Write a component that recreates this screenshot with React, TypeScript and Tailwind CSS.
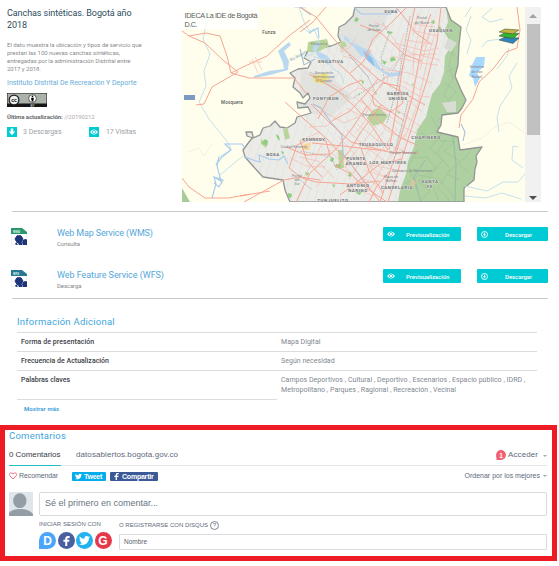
import React from "react";

const DIN = "font-['Roboto','Liberation_Sans',sans-serif]";
const ARIAL = "font-['Liberation_Sans',Arial,sans-serif]";

const CITY =
  "M355 7L353 16 345 24 339 27 338 36 341 42 331 46 318 48 308 51 304 58 311 62 308 68 298 69 290 73 295 78 293 87 300 93 303 98 308 93 310 98 305 104 297 102 298 108 308 107 311 113 297 117 295 123 287 128 280 127 275 121 270 126 263 128 260 135 253 138 247 136 246 132 252 132 253 137 249 142 243 150 245 157 252 165 263 177 283 180 285 190 290 202 464 202 464 188 474 180 475 169 477 162 476 156 482 147 460 150 458 137 437 132 441 125 442 115 458 113 462 108 466 100 461 90 455 76 458 65 459 45 461 27 451 20 446 7Z";
const HILLS =
  "M446 7L448 22 444 32 452 44 445 56 444 72 440 84 432 94 429 105 426 117 417 130 414 147 408 161 406 174 400 190 398 202 464 202 464 188 474 180 475 169 477 162 476 156 482 147 460 150 458 137 437 132 441 125 442 115 458 113 462 108 466 100 461 90 455 76 458 65 459 45 461 27 451 20Z";

const majorRoads = [
  "M182 31L189 36 206 33 220 36 227 56 231 73 249 78 294 78 306 93",
  "M189 36L205 43 224 61 238 72 212 87 204 104 196 105",
  "M310 20L290 35 267 56 243 67 231 73",
  "M300 7L316 17 329 33 340 46 360 63 378 79 402 92 425 105",
  "M326 7L312 23 300 32",
  "M395 7L401 13 416 33 431 44",
  "M401 13L407 7M401 13L390 24 373 39 366 55",
  "M415 7L410 31 402 70 397 106 389 150",
  "M431 14L425 29 418 66 412 99 398 147 380 202",
  "M441 7L437 42 427 80 411 130 397 174 388 202",
  "M311 104L330 123 351 142 389 152 419 153",
  "M312 143L343 146 386 151",
  "M367 106L353 127 337 148 310 173 296 202",
  "M285 102L305 120 327 139 354 168 380 202",
  "M309 74L338 91 356 108 371 125 388 150",
  "M318 119L329 97 349 85 362 80",
  "M362 100L377 119 401 138 417 145",
  "M378 79L365 95 350 111 332 121",
  "M333 59L349 73 364 88 380 104 404 121",
  "M360 25L381 33 405 55 422 61",
  "M371 50L362 63 350 73",
  "M372 96L383 83 399 86 403 103 391 112 374 105Z",
  "M289 168L297 145 313 138 326 141 330 156",
  "M289 168L302 178 316 182 351 184 380 181",
  "M244 202L284 180 300 177 320 180",
  "M240 196L270 191M182 178L189 187 205 198 229 198 250 194",
  "M390 171L377 186 369 202M361 148L369 171 383 193",
  "M334 165L351 174 366 188 387 202M340 195L357 182 380 164 402 159",
  "M517 7L520 30 517 48 506 52 493 69 479 82 473 99 461 115 459 128",
  "M337 167L350 150 361 132 381 105",
  "M286 147L306 155 330 154M300 140L307 161 322 177",
];

const minorRoads = [
  "M252 59L258 73M255 57L262 70M249 62H262",
  "M390 33L399 47 411 53 440 60M394 43L425 51 439 48M391 56L421 63 438 65",
  "M381 69L409 73 432 83M397 61L389 70 387 83M405 66L397 79 421 90",
  "M404 33L399 49 401 63M418 13L413 35M423 18L414 51 413 74M433 20L420 70",
  "M410 30L438 36M405 40L432 44M413 24L435 27M407 55L437 54",
  "M400 85L419 96 430 97M389 92L409 101 421 111M397 110L420 126",
  "M372 112L386 130 410 142M378 107L405 128 416 133",
  "M368 118L355 133M376 126L354 154 345 168M383 132L363 158 349 179",
  "M397 129L376 158 362 182M405 134L382 168 370 190",
  "M357 124L377 140 404 151M347 130L370 150 391 166",
  "M338 136L360 160 388 179M328 149L344 165 359 184",
  "M309 127L327 126 341 112M304 139L320 132M299 157L318 161 334 178",
  "M290 158L307 166 325 167M303 178L315 160 322 143M316 187L330 169",
  "M321 110L344 123 358 117M319 76L342 90M344 98L358 88 376 92",
  "M346 108L365 118M354 97L376 112M386 76L375 94 366 114",
  "M352 188L374 196M365 164L403 171M365 170L398 182M364 179L391 190",
  "M343 56L356 60 371 71M356 37L350 47 340 52M374 22L389 28",
  "M429 34L422 48 413 92 404 125 396 150M435 33L427 61 418 104 404 139",
];

const streams = [
  "M204 7L206 25 203 39 210 54 204 71 206 86 199 102 209 119 222 135 229 144 231 150 219 157 216 165",
  "M300 26L308 32 314 29 319 41 313 54 304 57M299 7L304 22 311 34",
  "M341 35L354 41 368 52 382 66 399 72",
  "M313 56L326 61 332 68 341 74 344 84",
  "M471 16L466 30 471 40 467 54M492 8L482 17 490 22 503 19M500 39L487 41 482 47",
  "M497 69L507 56 509 48M517 63L509 76 512 88 500 106M500 106L497 118 499 132",
  "M518 147L513 146 512 160 523 168M465 186L487 191 503 182 518 182 525 174",
  "M471 7L465 17M465 196L485 198 502 193 521 199",
  "M243 156L233 164 219 176 222 184",
  "M294 7L306 8",
];

const hillLines = [
  "M447 33L453 49 449 65 453 79 444 94 452 107 438 121",
  "M450 52L457 57M446 72L457 67M445 83L456 91 448 101",
  "M431 116L441 134 430 148 443 160 429 177 439 202",
  "M420 133L435 140 455 142 444 151 460 161 447 174 460 180",
  "M412 158L427 157 436 168 418 181 430 191 420 202",
  "M405 184L419 175 439 179 454 197M418 150L408 166 417 190",
  "M446 139L437 153 450 169 438 188 451 202M470 152L459 164 469 173",
];

type Label = [number, number, string];
const labels: Label[] = [
  [391, 13, "SUBA"],
  [441, 32, "USAQUEN"],
  [331, 62.5, "ENGATIVA"],
  [326, 100, "FONTIBON"],
  [398, 95, "BARRIOS"],
  [398, 99.5, "UNIDOS"],
  [314, 141, "KENNEDY"],
  [376, 145.5, "TEUSAQUILLO"],
  [356, 160, "PUENTE"],
  [356, 164.5, "ARANDA"],
  [388, 164, "LOS MARTIRES"],
  [426, 139, "CHAPINERO"],
  [430, 183, "SANTA"],
  [430, 187.5, "FE"],
  [358, 187, "ANTONIO"],
  [358, 191.5, "NARINO"],
  [397, 188.5, "CANDELARIA"],
  [333, 201.5, "TUNJUELITO"],
  [273, 156, "BOSA"],
];

const smallLabels: Label[] = [
  [324, 74, "Aeropuerto"],
  [324, 78, "Internacional"],
  [324, 82, "El Dorado"],
  [374, 27, "Portal"],
  [374, 31, "de Suba"],
  [422, 19, "Portal"],
  [422, 24, "del Norte"],
  [477, 68, "Embalse"],
  [477, 73, "de San"],
  [477, 78, "Rafael"],
  [319, 45, "Parque La"],
  [374, 116, "Parque Simón"],
  [403, 154, "Parque Nacional"],
  [412, 172, "Santuario de Monserrate"],
  [391, 178, "Plaza de"],
  [391, 182, "Bolívar"],
  [294, 148, "Ciudad Kennedy"],
  [297, 177, "Portal"],
  [297, 181, "del"],
  [297, 185, "Sur"],
];

function CityMap() {
  return (
    <svg className="block h-[195px] w-[343px]" viewBox="182 7 343 195">
      <defs>
        <clipPath id="city"><path d={CITY} /></clipPath>
        <clipPath id="hills"><path d={HILLS} /></clipPath>
      </defs>
      <rect x="182" y="7" width="343" height="195" fill="#fffeed" />
      <path d="M182 188L190 202H182Z" fill="#a8cc99" />
      <path d="M188 152L199 148 204 156 212 144M463 145L482 138 494 128 509 122 525 133" fill="none" stroke="#efeadb" strokeWidth=".7" />
      <path d={CITY} fill="#ebebe8" />
      <g clipPath="url(#city)" fill="none">
        <path d="M353 7L391 7 379 37 360 60 340 52 338 30ZM301 70L331 76 353 98 330 117 299 111Z" fill="#e2e3df" />
        <g stroke="#dedfdc" strokeWidth=".5">
          {Array.from({ length: 24 }, (_, i) => (
            <path key={i} d={`M${270 + i * 8} 7l-60 195M${230 + i * 10} 40l140 162`} />
          ))}
        </g>
        <path d="M310 72L328 84 349 98M349 55L368 77 376 94M353 98L390 75 403 53M300 151L331 157 337 170M298 178L312 190M383 23L389 34 381 57 384 79" stroke="#b7babb" strokeWidth=".9" strokeDasharray="2 1" />
      </g>
      <path d={HILLS} fill="#afd0a1" />
      <g clipPath="url(#hills)" fill="none">
        <g stroke="#9dc098" strokeWidth=".6">
          {hillLines.map((d) => <path key={d} d={d} />)}
        </g>
        <path d="M453 137L456 164 455 202M425 160L414 177 421 202" stroke="#8db8ad" strokeWidth=".8" />
      </g>
      <path d="M442 103L456 101 456 112 447 112ZM448 38L457 43 451 52 444 48Z" fill="#d8ddd3" />
      <path d="M411 178L416 183 412 188Z" fill="#dfc49d" />
      <path d={CITY} fill="none" stroke="#929694" strokeWidth="1.3" strokeLinejoin="round" />

      <path d="M308 42L327 39 329 46 318 52 307 52ZM283 129L287 127 290 138 285 140ZM340 41L345 42 347 46 341 49ZM367 118L373 110 379 108 388 116 383 123 373 126ZM338 150L343 150 344 168 339 168ZM261 139L267 143 266 148 261 144Z" fill="#b9d59d" />
      <path d="M313 76L326 73 329 78 323 84 314 82Z" fill="#eee37a" />
      <path d="M302 145L311 142 309 150 302 150ZM304 145L311 144 309 151Z" fill="#f8d8a1" />
      <g fill="#8fce7e">
        <path d="M356 17l3 2-2 3-3-1zM388 31l5 1-2 2-4-1zM390 58l4-1 2 3-5 2zM382 60l5 2-3 3zM361 80l3 1-1 4zM358 93l2 1-1 2zM265 139l3 2-1 5-5-3zM276 134l3 2 1 5-3-3zM331 157l3 1-1 4-3-1zM336 164l5 1-1 4-5-2zM357 190l5 1-2 4-4-2zM305 172l4 1-2 3zM350 171l2 3-1 3-3-1zM432 20l3 1-1 3-3-1zM439 26l2 1-1 4-3-1zM412 83l2 1-1 2zM281 151l3 1-1 3zM397 111l3 1-1 2zM374 92l3 1-1 2zM332 184l3 1-1 3zM288 193l4 1-1 4-3-1z" />
      </g>

      <path d="M254 76L269 71 284 69 283 63 278 51 289 42 291 45 284 51 289 61 288 70 270 75 254 78ZM345 35L350 42 361 47 369 50 376 61 381 69 389 73 400 72 403 65 402 75 390 77 376 68 371 59 361 56 354 47 344 39ZM314 44L321 42 317 51 312 50ZM314 50L326 55 332 61 328 65 319 58Z" fill="#b9d7ee" />
      <path d="M363 50L372 58 375 67 367 60Z" fill="#8fbfeb" />
      <path d="M472 65L476 57 485 57 484 66 477 73 480 78 475 87 473 78 469 76Z" fill="#a9d8ff" />
      <g fill="none" stroke="#c4e1ea" strokeWidth="1">
        {streams.map((d) => <path key={d} d={d} />)}
      </g>
      <g fill="none" stroke="#a5caee" strokeWidth="1.1">
        <path d="M216 165L222 157 231 150 225 144 242 144 244 147M219 157L217 166 221 181 214 177 216 184 212 198M214 177L223 180 219 187 214 183M245 157L253 160 260 162 259 155 269 159 279 160 284 156 288 164M300 7L311 15M309 33L318 28 319 38M354 7L361 14 375 14 390 14 399 9" />
        <path d="M313 104L321 108 330 121 342 135 343 154 354 168 369 188M461 124L465 132 463 141M300 49L304 65 315 59" stroke="#a7bfda" />
      </g>

      <g fill="none" stroke="#f7a592" strokeWidth="1" strokeLinejoin="round">
        {majorRoads.map((d) => <path key={d} d={d} />)}
      </g>
      <g fill="none" stroke="#f6b9ae" strokeWidth=".65">
        {minorRoads.map((d) => <path key={d} d={d} />)}
      </g>
      <path d="M410 16L404 49 396 92 387 123M408 101L401 129 395 151M349 55L369 78" fill="none" stroke="#a5a2a7" strokeWidth=".8" strokeDasharray="1.5 1" />

      <g className={DIN} textAnchor="middle" fontWeight="700" fill="#6b7075" stroke="#f2f2ed" strokeWidth=".5" paintOrder="stroke" letterSpacing=".55">
        {labels.map(([x, y, t]) => <text key={`${t}${x}`} x={x} y={y} fontSize="4.4">{t}</text>)}
      </g>
      <g className={DIN} textAnchor="middle" fill="#81858a">
        {smallLabels.map(([x, y, t]) => <text key={`${x}${y}`} x={x} y={y} fontSize="3.7">{t}</text>)}
        <text x="269" y="33.5" fontSize="4.5" fontWeight="500" fill="#55585a" letterSpacing=".3">Funza</text>
        <text x="232" y="104.3" fontSize="4.5" fontWeight="500" fill="#55585a" letterSpacing=".2">Mosquera</text>
        <text x="299" y="57" fontSize="4" fill="#7a97b0" transform="rotate(-28 299 57)">Río Bogotá</text>
      </g>

      <rect x="182" y="7" width="76" height="22" fill="#fff" opacity=".78" />
      <g className={ARIAL} fontSize="7.2" fill="#5a5e60">
        <text x="184.5" y="18" textLength="73">IDECA La IDE de Bogotá</text>
        <text x="184.5" y="27" textLength="13">D.C.</text>
      </g>
      <rect x="184" y="95" width="11" height="5" fill="#7c9bc0" />
      <g stroke="#33453a" strokeWidth=".5">
        <path d="M499 40L505 37 519 38 513 43.5Z" fill="#2e86bd" />
        <path d="M499 36L505 32.5 519 33.5 513 38.5Z" fill="#35b52f" />
        <path d="M499 32L505 29 519 30 513 34Z" fill="#c6b23f" />
      </g>
    </svg>
  );
}

function ServiceIcon({ kind, tint }: { kind: string; tint: string }) {
  return (
    <svg className="block h-[17px] w-4" viewBox="0 0 16 17">
      <path d="M.4 5V16.6H15.5V5" fill="#fff" stroke="#e2e4ea" strokeWidth=".6" />
      <path d="M0 0H11L16 4V6H0Z" fill={tint} />
      <text x="2" y="4.6" fontSize="3" fontWeight="700" fill="#d9efe6" className={DIN}>{kind}</text>
      <path d="M6 7.800H10L12 11 10 14.500H6L4 11Z" fill="#1e3478" stroke="#1e3478" strokeLinejoin="round" />
      <path d="M6.500 14H10.500L11.500 17H8Z" fill="#1e3478" />
      <path d="M12 12L14 11 16 11.500V17H12L11 14.500Z" fill="#1e3478" />
      <path d="M4 15.500L5.500 14.500 7 16.500 5 17Z" fill="#1e3478" />
    </svg>
  );
}

function EyeIcon({ className }: { className: string }) {
  return (
    <svg className={className} viewBox="0 0 8 6">
      <path d="M0 3Q4-2.200 8 3 4 8.200 0 3Z" fill="#fff" />
      <circle cx="4" cy="3" r="1.55" fill="none" stroke="#00cad3" strokeWidth=".8" />
    </svg>
  );
}

function ServiceRow({ kind, tint, name, action, nameClass }: {
  kind: string; tint: string; name: string; action: string; nameClass: string;
}) {
  return (
    <div className="flex h-[42px] items-start">
      <div className="w-[46px] pt-px"><ServiceIcon kind={kind} tint={tint} /></div>
      <div className="w-[326px] whitespace-nowrap">
        <div className={`text-[9px] leading-[12px] text-[#54a8da] ${nameClass}`}>{name}</div>
        <div className="text-[6px] leading-[10px] tracking-[-0.12px] text-[#85888a]">{action}</div>
      </div>
      <div className="flex h-[14px] w-[78px] items-center rounded-[1px] bg-[#00cad3] pl-1 text-[6px] font-medium text-white">
        <EyeIcon className="h-[6px] w-2" />
        <span className="ml-[11px] tracking-[-0.04px]">Previsualización</span>
      </div>
      <div className="ml-4 flex h-[14px] w-[71px] items-center rounded-[1px] bg-[#00cad3] pl-1 text-[6px] font-medium text-white">
        <svg className="size-[7px]" viewBox="0 0 7 7">
          <circle cx="3.500" cy="3.500" r="3" fill="none" stroke="#fff" strokeWidth=".9" />
          <path d="M3.500 1.700V4.300M2.200 3.500L3.500 4.700 4.800 3.500" fill="none" stroke="#fff" strokeWidth=".9" />
        </svg>
        <span className="ml-[17px] tracking-[-0.04px]">Descargar</span>
      </div>
    </div>
  );
}

function DatasetSummary() {
  return (
    <div className="w-[175px] whitespace-nowrap">
      <h1 className="text-[9px] leading-[12px] tracking-[-0.07px] text-[#2d4c5c]">Canchas sintéticas. Bogotá año<br />2018</h1>
      <p className="mt-[10px] text-[6px] leading-[8px] tracking-[-0.03px] text-[#8a8d90]">
        El dato muestra la ubicación y tipos de servicio que<br />
        prestan las 100 nuevas canchas sintéticas,<br />
        entregadas por la administración Distrital entre<br />
        2017 y 2018.
      </p>
      <div className="mt-[5px] text-[7px] leading-[10px] tracking-[-0.02px] text-[#68acd9]">Instituto Distrital De Recreación Y Deporte</div>
      <svg className="mt-[5px] block h-[14px] w-10" viewBox="0 0 40 14">
        <path d="M0 0H40V14H0Z" fill="#161616" />
        <path d="M.5.5H39.500V10.500H.5Z" fill="#aab2aa" />
        <circle cx="7" cy="7" r="5.500" fill="#202020" />
        <circle cx="7" cy="7" r="3.900" fill="#eee" stroke="#fff" strokeWidth=".6" />
        <text x="4.200" y="8.600" fontSize="5" fontWeight="700" className={ARIAL}>cc</text>
        <circle cx="25.500" cy="5.500" r="3.900" fill="#fff" stroke="#333" strokeWidth=".8" />
        <circle cx="25.500" cy="3.400" r=".8" />
        <path d="M24.200 4.700H26.800V6.800H26.300V8.500H24.700V6.800H24.200Z" />
        <text x="23.500" y="13.600" fontSize="3" fill="#fff" className={ARIAL}>BY</text>
      </svg>
      <div className="mt-[5px] text-[6px] leading-[10px] text-[#b0a9af]">
        <b className="tracking-[-0.04px] text-[#686b6e]">Última actualización:</b> <span className="tracking-[-0.1px]">//20190212</span>
      </div>
      <div className="mt-[5px] flex h-[10px] items-center text-[7px] leading-[10px] text-[#9ca1a6]">
        <svg className="size-[10px]" viewBox="0 0 10 10">
          <path d="M0 0H10V10H0Z" fill="#00cad3" />
          <path d="M3.700 1.500H6.300V4.500H8.300L5 8.300 1.700 4.500H3.700Z" fill="#fff" />
        </svg>
        <span className="ml-[6px] w-[66px] tracking-[-0.02px]">3 Descargas</span>
        <span className="flex size-[10px] items-center justify-center bg-[#00cad3]"><EyeIcon className="h-[6px] w-2" /></span>
        <span className="ml-[7px] tracking-[-0.08px]">17 Visitas</span>
      </div>
    </div>
  );
}

function InfoTable() {
  const key = "w-[260px] pl-1 font-medium text-[#3c4045]";
  const value = "flex-1 pl-1 tracking-[0.03px] text-[#7f8790]";
  return (
    <section className="ml-[17px] mt-[17px] w-[520px] whitespace-nowrap text-[7px] leading-[10px]">
      <h2 className="h-4 text-[9.500px] leading-[12px] tracking-[0.24px] text-[#3ea5dc]">Información Adicional</h2>
      <div className="flex h-[19px] border-t border-[#dadcdd] pt-1"><div className={`${key} tracking-[0.06px]`}>Forma de presentación</div><div className={value}>Mapa Digital</div></div>
      <div className="flex h-[19px] border-t border-[#dadcdd] pt-1"><div className={key}>Frecuencia de Actualización</div><div className={value}>Según necesidad</div></div>
      <div className="flex h-[29px] border-t border-[#dadcdd] pt-1">
        <div className={`${key} h-[25px] border-b border-[#dadcdd]`}>Palabras claves</div>
        <div className={value}>Campos Deportivos , Cultural , Deportivo , Escenarios , Espacio público , IDRD ,<br />Metropolitano , Parques , Ragional , Recreación , Vecinal</div>
      </div>
      <div className="ml-[7px] mt-[5px] text-[6px] font-bold leading-[10px] tracking-[0.08px] text-[#45a4dc]">Mostrar más</div>
    </section>
  );
}

function FacebookMark({ className }: { className: string }) {
  return <svg className={className} viewBox="0 0 10 16"><path d="M3 16V9H0V6H3V4Q3 0 7 0H10V3H8Q6.200 3 6.200 4.700V6H9.700L9.200 9H6.200V16Z" fill="#fff" /></svg>;
}

function TwitterMark({ className }: { className: string }) {
  return (
    <svg className={className} viewBox="0 0 24 24">
      <path fill="#fff" d="M23.950 4.570a10 10 0 0 1-2.820.775 4.960 4.960 0 0 0 2.160-2.723 9.900 9.900 0 0 1-3.130 1.195 4.920 4.920 0 0 0-8.380 4.482A13.950 13.950 0 0 1 1.640 3.162a4.820 4.820 0 0 0-.67 2.475c0 1.710.87 3.213 2.190 4.096a4.900 4.900 0 0 1-2.230-.616v.06a4.920 4.920 0 0 0 3.950 4.827 5 5 0 0 1-2.210.085 4.940 4.940 0 0 0 4.600 3.419A9.870 9.870 0 0 1 0 19.540a14 14 0 0 0 7.560 2.209c9.050 0 14-7.496 14-13.985l-.02-.63a9.940 9.940 0 0 0 2.410-2.564Z" />
    </svg>
  );
}

function Comments() {
  return (
    <section className={`mt-[11px] h-[136px] w-[557px] whitespace-nowrap border-[5px] border-[#ed1c24] pl-1 pr-[5px] text-[#60697a] ${ARIAL}`}>
      <h2 className={`h-[18px] text-[9.500px] leading-[12px] tracking-[0.25px] text-[#3ea5dc] ${DIN}`}>Comentarios</h2>
      <div className="flex h-[18px] border-b border-[#e3e5e7] text-[8px] leading-[14px]">
        <div className="h-[18px] w-[52px] border-b border-[#22c0c3] tracking-[-0.05px] text-[#373c48]">0 Comentarios</div>
        <div className="ml-[15px] tracking-[0.08px]">datosabiertos.bogota.gov.co</div>
        <div className="ml-auto flex h-[14px] items-center">
          <svg className="mr-[2px] size-[10px]" viewBox="0 0 10 10">
            <circle cx="5" cy="5" r="4.900" fill="#f05f70" />
            <path d="M.5 5V10H5Z" fill="#f05f70" />
            <text x="3.300" y="7.500" fontSize="6.500" fontWeight="700" fill="#fff">1</text>
          </svg>
          <span className="tracking-[0.08px]">Acceder</span><span className="ml-[5px] mt-px border-x-[2px] border-t-[2px] border-x-transparent border-t-[#a2a8b0]" />
        </div>
      </div>
      <div className="flex h-[26px] items-start pt-[6px] text-[7px] leading-[8px]">
        <svg className="mr-[2px] size-2" viewBox="0 0 24 24"><path d="M12 21L3 12C-3 5 6-1 12 6 18-1 27 5 21 12Z" fill="none" stroke="#ee5b6d" strokeWidth="2.600" /></svg>
        <span className="w-[53px] tracking-[-0.1px]">Recomendar</span>
        <span className="flex h-[9px] w-[34px] items-center rounded-[1px] bg-[#04abed] pl-[3px] font-bold tracking-[-0.25px] text-white"><TwitterMark className="mr-[2px] size-[7px]" />Tweet</span>
        <span className="ml-1 flex h-[9px] w-12 items-center rounded-[1px] bg-[#3c5896] pl-1 font-bold tracking-[-0.22px] text-white"><FacebookMark className="mr-[3px] h-[7px] w-[5px]" />Compartir</span>
        <span className="ml-auto">Ordenar por los mejores</span>
        <span className="ml-[3px] mt-[3px] border-x-[2px] border-t-[2px] border-x-transparent border-t-[#a2a8b0]" />
      </div>
      <div className="flex h-6">
        <svg className="mr-[6px] size-6" viewBox="0 0 24 24"><path d="M0 0H24V24H0Z" fill="#dfe5e8" /><ellipse cx="10.800" cy="8.700" rx="6.700" ry="7.400" fill="#939da5" /><path d="M0 24V21Q3 17 11 17 20 17 24 22V24Z" fill="#939da5" /></svg>
        <div className="flex-1 rounded-[2px] border border-[#d8dce1] pl-[5px] text-[9px] leading-[21px] text-[#69747f]">Sé el primero en comentar...</div>
      </div>
      <div className="flex pl-[30px]">
        <div className="w-20">
          <div className="pt-1 text-[6px] leading-[8px] tracking-[0.03px]">INICIAR SESIÓN CON</div>
          <div className="mt-1 flex gap-[1.500px]">
            <span className="flex size-[17px] items-center justify-center rounded-full rounded-bl-none bg-[#4ba5fa] text-[12px] font-bold text-white">D</span>
            <span className="flex size-[17px] items-center justify-center rounded-full bg-[#485fa0]"><FacebookMark className="h-[10px] w-[7px]" /></span>
            <span className="flex size-[17px] items-center justify-center rounded-full bg-[#22b2ef]"><TwitterMark className="size-[11px]" /></span>
            <span className="flex size-[17px] items-center justify-center rounded-full bg-[#e5384a] text-[12px] font-bold text-white">G</span>
          </div>
        </div>
        <div className="flex-1 pt-1">
          <div className="flex h-[14px] items-start pt-px text-[6px] leading-[9px]">O REGISTRARSE CON DISQUS
            <span className="ml-[2px] flex size-[9px] items-center justify-center rounded-full border border-[#7b8390] text-[6px] leading-[7px]">?</span>
          </div>
          <div className="h-4 rounded-[1px] border border-[#d8dce1] pl-1 text-[6.500px] leading-[14px] text-[#59616c]">Nombre</div>
        </div>
      </div>
    </section>
  );
}

export default function App() {
  return (
    <main className={`h-[566px] w-[559px] overflow-hidden bg-white ${DIN}`}>
      <div className="flex h-[211px] pl-[7px] pt-[7px]">
        <DatasetSummary />
        <CityMap />
        <div className="flex h-[195px] w-4 flex-col items-center bg-[#f1f1f1]">
          <span className="mt-[7px] border-x-[4px] border-b-[4px] border-x-transparent border-b-[#a3a3a3]" />
          <span className="mt-[6px] h-[111px] w-[13px] bg-[#c1c1c1]" />
          <span className="mb-[2px] mt-auto border-x-[4px] border-t-[4px] border-x-transparent border-t-[#505050]" />
        </div>
      </div>
      <section className="ml-3 w-[536px] border-y border-[#c9cacb] pt-[15px]">
        <div className="-ml-px h-[71px]">
          <ServiceRow kind="WMS" tint="#27976e" name="Web Map Service (WMS)" action="Consulta" nameClass="tracking-[-0.15px]" />
          <ServiceRow kind="WFS" tint="#287993" name="Web Feature Service (WFS)" action="Descarga" nameClass="tracking-[-0.06px]" />
        </div>
      </section>
      <InfoTable />
      <Comments />
    </main>
  );
}
